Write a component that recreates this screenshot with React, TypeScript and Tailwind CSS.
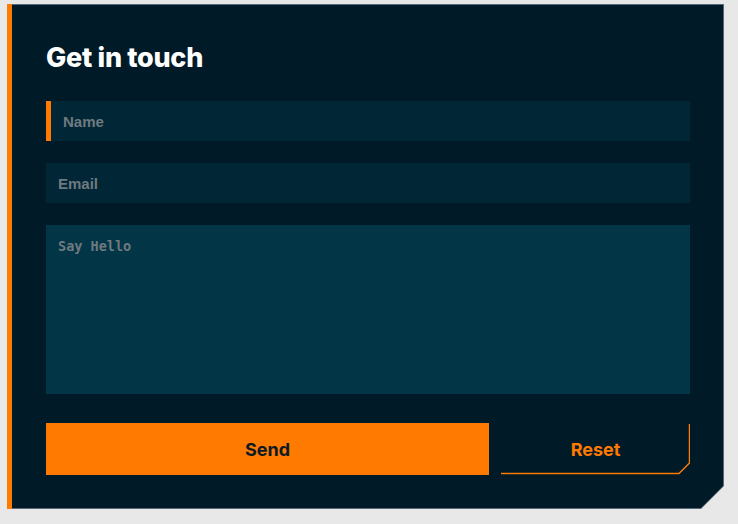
import { useState } from "react";

export default function App() {
  const [name, setName] = useState("");
  const [email, setEmail] = useState("");
  const [message, setMessage] = useState("");

  const reset = () => {
    setName("");
    setEmail("");
    setMessage("");
  };

  return (
    <div className="min-h-screen bg-[#e8e8e8] pl-[7px] pt-[4px]">
      {/* outer shell gives the thin grey edge and the orange left bar */}
      <div className="w-[717px] h-[505px] bg-[#56697a] border-l-[5px] border-[#ff7a00] pt-px pr-px pb-px [clip-path:polygon(0_0,100%_0,100%_calc(100%_-_23px),calc(100%_-_23px)_100%,0_100%)]">
        <div className="h-full bg-[#011a27] pl-[34px] pr-[33px] pt-[37px] [clip-path:polygon(0_0,100%_0,100%_calc(100%_-_22px),calc(100%_-_22px)_100%,0_100%)]">
          <h1 className="font-['Inter',sans-serif] text-[27px] leading-[32px] font-extrabold text-white tracking-[-0.3px]">
            Get in touch
          </h1>

          <form
            className="mt-[27px] flex flex-col gap-[22px]"
            onSubmit={(e) => e.preventDefault()}
          >
            <input
              autoFocus
              placeholder="Name"
              value={name}
              onChange={(e) => setName(e.target.value)}
              className="h-10 w-full border-l-[5px] border-[#ff7a00] bg-[#012737] px-3 font-['Liberation_Sans',sans-serif] text-[15px] font-bold text-gray-200 placeholder:text-[#6f7a80] caret-[#8aa0ad] outline-none"
            />
            <input
              placeholder="Email"
              value={email}
              onChange={(e) => setEmail(e.target.value)}
              className="h-10 w-full bg-[#012737] px-3 font-['Liberation_Sans',sans-serif] text-[15px] font-bold text-gray-200 placeholder:text-[#6f7a80] outline-none"
            />
            <textarea
              placeholder="Say Hello"
              value={message}
              onChange={(e) => setMessage(e.target.value)}
              className="block h-[169px] w-full resize-none bg-[#023546] px-3 pt-[13px] pb-3 font-['DejaVu_Sans_Mono',monospace] text-[13.5px] leading-[16px] font-bold text-gray-200 placeholder:text-[#6f7a80] outline-none"
            />

            <div className="mt-[7px] flex gap-3 font-['Inter',sans-serif] text-[18px] font-bold">
              <button
                type="submit"
                className="h-[52px] w-[443px] bg-[#ff7a00] text-[#0b1a24]"
              >
                Send
              </button>
              <button
                type="button"
                onClick={reset}
                className="relative h-[52px] flex-1 text-[#ff7a00]"
              >
                <svg
                  className="absolute inset-0"
                  width="189"
                  height="52"
                  viewBox="0 0 189 52"
                  fill="none"
                >
                  <path
                    d="M188.5 1 V40 L178 50.5 H0"
                    stroke="#ff7a00"
                    strokeWidth="1.5"
                  />
                </svg>
                <span className="relative">Reset</span>
              </button>
            </div>
          </form>
        </div>
      </div>
    </div>
  );
}
